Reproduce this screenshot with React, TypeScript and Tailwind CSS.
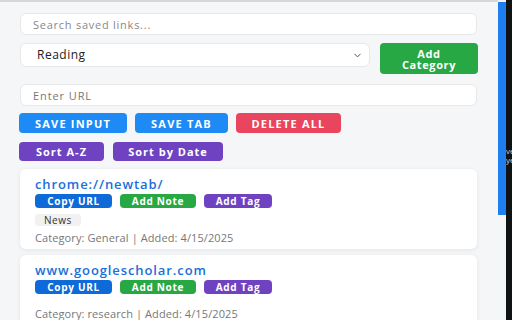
import { ChevronDown } from "lucide-react";

const links = [
  {
    url: "chrome://newtab/",
    tags: ["News"],
    category: "General",
    added: "4/15/2025",
  },
  {
    url: "www.googlescholar.com",
    tags: [],
    category: "research",
    added: "4/15/2025",
  },
];

function LinkCard({ link }: { link: (typeof links)[number] }) {
  return (
    <div className="bg-white rounded-md shadow-[0_1px_4px_rgba(0,0,0,0.08)] px-[15px] pt-[6px] pb-[4px]">
      <div className="text-[13px] font-semibold text-[#1a6fd8] leading-[18px] tracking-[0.9px]">
        {link.url}
      </div>
      <div className="flex gap-2 mt-px">
        <button className="w-[77px] h-[14px] rounded-[4px] bg-[#0d6ad8] text-white text-[10px] font-bold leading-none tracking-[0.7px]">
          Copy URL
        </button>
        <button className="w-[76px] h-[14px] rounded-[4px] bg-[#28a745] text-white text-[10px] font-bold leading-none tracking-[0.7px]">
          Add Note
        </button>
        <button className="w-[68px] h-[14px] rounded-[4px] bg-[#6f42c1] text-white text-[10px] font-bold leading-none tracking-[0.7px]">
          Add Tag
        </button>
      </div>
      {link.tags.length > 0 ? (
        <div className="flex gap-1 mt-[6px]">
          {link.tags.map((t) => (
            <span
              key={t}
              className="bg-[#f1f1f1] rounded-[3px] px-[9px] h-[12px] text-[10px] leading-[12px] text-[#333] tracking-[0.5px]"
            >
              {t}
            </span>
          ))}
        </div>
      ) : (
        <div className="h-[8px]" />
      )}
      <div className="text-[11px] text-[#777] mt-[5px] leading-[14px] tracking-[0.1px]">
        Category: {link.category} | Added: {link.added}
      </div>
    </div>
  );
}

export default function App() {
  return (
    <div
      className="w-[512px] h-[320px] overflow-hidden flex bg-[#f5f6f8]"
      style={{ fontFamily: '"Open Sans", "Noto Sans", sans-serif' }}
    >
      <div className="w-[498px] h-full border-t-2 border-[#d6d6d6] px-5 pt-[11px]">
        <input
          className="block w-[457px] h-[22px] bg-white border border-[#e8e8e8] rounded-md px-3 text-[11px] tracking-[0.75px] text-[#333] placeholder:text-[#888] outline-none"
          placeholder="Search saved links..."
        />
        <div className="flex gap-[10px] mt-2 items-start">
          <div className="w-[350px] h-[24px] bg-white border border-[#e8e8e8] rounded-md flex items-center justify-between pl-[16px] pr-[6px]">
            <span className="text-[12px] text-[#222] tracking-[0.5px]">Reading</span>
            <ChevronDown size={11} strokeWidth={2} className="text-[#444]" />
          </div>
          <button className="w-[98px] h-[31px] bg-[#28a745] rounded-[4px] text-white text-[11px] font-bold leading-[11px] tracking-[0.6px]">
            Add
            <br />
            Category
          </button>
        </div>
        <input
          className="block mt-[10px] w-[457px] h-[22px] bg-white border border-[#e8e8e8] rounded-md px-3 text-[11px] tracking-[0.9px] text-[#333] placeholder:text-[#777] outline-none"
          placeholder="Enter URL"
        />
        <div className="flex gap-2 mt-[7px] -ml-px">
          <button className="w-[108px] h-[20px] rounded-[4px] bg-[#1e8af5] text-white text-[11px] font-bold leading-none tracking-[1.2px]">
            SAVE INPUT
          </button>
          <button className="w-[93px] h-[20px] rounded-[4px] bg-[#1e8af5] text-white text-[11px] font-bold leading-none tracking-[1.2px]">
            SAVE TAB
          </button>
          <button className="w-[105px] h-[20px] rounded-[4px] bg-[#e9455e] text-white text-[11px] font-bold leading-none tracking-[1.2px]">
            DELETE ALL
          </button>
        </div>
        <div className="flex gap-[9px] mt-[9px] -ml-px">
          <button className="w-[85px] h-[19px] rounded-[4px] bg-[#6f42c1] text-white text-[11px] font-bold leading-none tracking-[1px]">
            Sort A-Z
          </button>
          <button className="w-[110px] h-[19px] rounded-[4px] bg-[#6f42c1] text-white text-[11px] font-bold leading-none tracking-[1px]">
            Sort by Date
          </button>
        </div>
        <div className="flex flex-col gap-[6px] mt-2 w-[457px]">
          {links.map((l) => (
            <LinkCard key={l.url} link={l} />
          ))}
        </div>
      </div>
      <div className="w-[8px] h-full bg-[#f5f6f8] pt-[2px]">
        <div className="w-full h-[213px] bg-[#1f7ef0]" />
      </div>
      <div className="w-[6px] h-full bg-[#101314] flex flex-col pt-[146px] text-[8px] leading-[9px] text-[#cfcfcf] overflow-hidden whitespace-nowrap">
        <span>ve</span>
        <span>ye</span>
      </div>
    </div>
  );
}
